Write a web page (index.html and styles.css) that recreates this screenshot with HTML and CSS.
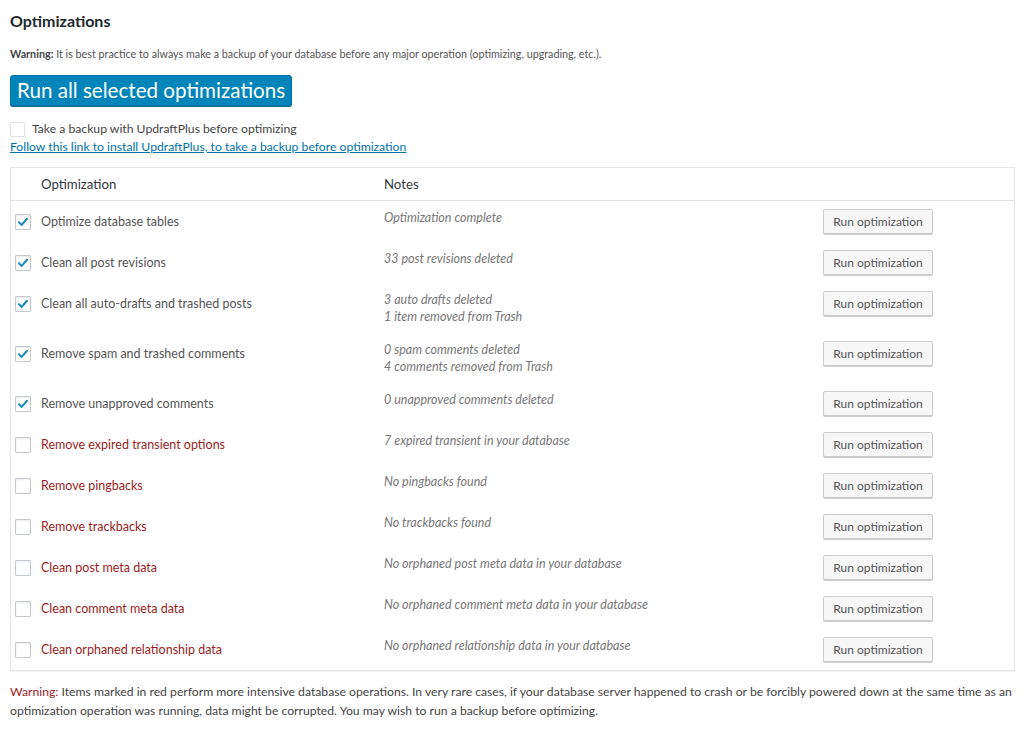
FILE: index.html
```html
<!DOCTYPE html>
<html lang="en">
<head>
<meta charset="utf-8">
<title>Optimizations</title>
<link rel="stylesheet" href="styles.css">
</head>
<body>
<div class="page">
  <h2 class="title">Optimizations</h2>
  <p class="top-warning"><strong>Warning:</strong> It is best practice to always make a backup of your database before any major operation (optimizing, upgrading, etc.).</p>
  <button class="primary-btn" type="button">Run all selected optimizations</button>
  <label class="backup-row"><span class="cb cb-light"></span><span class="backup-text">Take a backup with UpdraftPlus before optimizing</span></label>
  <a class="install-link" href="#">Follow this link to install UpdraftPlus, to take a backup before optimization</a>

  <div class="opt-table">
    <div class="row head">
      <div class="c-check"></div>
      <div class="c-label">Optimization</div>
      <div class="c-notes">Notes</div>
      <div class="c-action"></div>
    </div>

    <div class="row">
      <div class="c-check"><span class="cb checked"><svg viewBox="0 0 16 16"><path d="M3.4 8.3 L6.5 11.3 L12.6 4.3"/></svg></span></div>
      <div class="c-label">Optimize database tables</div>
      <div class="c-notes">Optimization complete</div>
      <div class="c-action"><button class="btn" type="button">Run optimization</button></div>
    </div>
    <div class="row">
      <div class="c-check"><span class="cb checked"><svg viewBox="0 0 16 16"><path d="M3.4 8.3 L6.5 11.3 L12.6 4.3"/></svg></span></div>
      <div class="c-label">Clean all post revisions</div>
      <div class="c-notes">33 post revisions deleted</div>
      <div class="c-action"><button class="btn" type="button">Run optimization</button></div>
    </div>
    <div class="row">
      <div class="c-check"><span class="cb checked"><svg viewBox="0 0 16 16"><path d="M3.4 8.3 L6.5 11.3 L12.6 4.3"/></svg></span></div>
      <div class="c-label">Clean all auto-drafts and trashed posts</div>
      <div class="c-notes">3 auto drafts deleted<br>1 item removed from Trash</div>
      <div class="c-action"><button class="btn" type="button">Run optimization</button></div>
    </div>
    <div class="row">
      <div class="c-check"><span class="cb checked"><svg viewBox="0 0 16 16"><path d="M3.4 8.3 L6.5 11.3 L12.6 4.3"/></svg></span></div>
      <div class="c-label">Remove spam and trashed comments</div>
      <div class="c-notes">0 spam comments deleted<br>4 comments removed from Trash</div>
      <div class="c-action"><button class="btn" type="button">Run optimization</button></div>
    </div>
    <div class="row">
      <div class="c-check"><span class="cb checked"><svg viewBox="0 0 16 16"><path d="M3.4 8.3 L6.5 11.3 L12.6 4.3"/></svg></span></div>
      <div class="c-label">Remove unapproved comments</div>
      <div class="c-notes">0 unapproved comments deleted</div>
      <div class="c-action"><button class="btn" type="button">Run optimization</button></div>
    </div>
    <div class="row">
      <div class="c-check"><span class="cb"></span></div>
      <div class="c-label red">Remove expired transient options</div>
      <div class="c-notes">7 expired transient in your database</div>
      <div class="c-action"><button class="btn" type="button">Run optimization</button></div>
    </div>
    <div class="row">
      <div class="c-check"><span class="cb"></span></div>
      <div class="c-label red">Remove pingbacks</div>
      <div class="c-notes">No pingbacks found</div>
      <div class="c-action"><button class="btn" type="button">Run optimization</button></div>
    </div>
    <div class="row">
      <div class="c-check"><span class="cb"></span></div>
      <div class="c-label red">Remove trackbacks</div>
      <div class="c-notes">No trackbacks found</div>
      <div class="c-action"><button class="btn" type="button">Run optimization</button></div>
    </div>
    <div class="row">
      <div class="c-check"><span class="cb"></span></div>
      <div class="c-label red">Clean post meta data</div>
      <div class="c-notes">No orphaned post meta data in your database</div>
      <div class="c-action"><button class="btn" type="button">Run optimization</button></div>
    </div>
    <div class="row">
      <div class="c-check"><span class="cb"></span></div>
      <div class="c-label red">Clean comment meta data</div>
      <div class="c-notes">No orphaned comment meta data in your database</div>
      <div class="c-action"><button class="btn" type="button">Run optimization</button></div>
    </div>
    <div class="row">
      <div class="c-check"><span class="cb"></span></div>
      <div class="c-label red">Clean orphaned relationship data</div>
      <div class="c-notes">No orphaned relationship data in your database</div>
      <div class="c-action"><button class="btn" type="button">Run optimization</button></div>
    </div>
  </div>

  <div class="bottom-warning">
    <div class="bw-line"><span class="warn-red">Warning:</span> Items marked in red perform more intensive database operations. In very rare cases, if your database server happened to crash or be forcibly powered down at the same time as an</div>
    <div class="bw-line">optimization operation was running, data might be corrupted. You may wish to run a backup before optimizing.</div>
  </div>
</div>
</body>
</html>
```

FILE: styles.css
```css
* { box-sizing: border-box; }

html, body {
  margin: 0;
  padding: 0;
  background: #ffffff;
}

body {
  font-family: Lato, "Open Sans", "Liberation Sans", sans-serif;
  color: #444;
}

.page {
  padding: 11px 9px 0 10px;
}

.title {
  margin: 0;
  font-size: 16px;
  line-height: 20px;
  font-weight: 700;
  color: #23282d;
}

.top-warning {
  margin: 16px 0 0;
  font-size: 10.75px;
  line-height: 14px;
  color: #555;
}

.top-warning strong {
  font-weight: 700;
  color: #444;
}

.primary-btn {
  display: block;
  margin: 14px 0 0;
  height: 31px;
  padding: 0 6px 2px 6px;
  white-space: nowrap;
  font-family: inherit;
  font-size: 20.6px;
  line-height: 28px;
  color: #fff;
  background: #0085ba;
  border: 1px solid #0073aa;
  border-radius: 3px;
  box-shadow: 0 1px 0 #006799;
  text-align: center;
}

.backup-row {
  display: flex;
  align-items: center;
  gap: 7px;
  margin-top: 14px;
  height: 18px;
  font-size: 12.2px;
  line-height: 18px;
  color: #444;
}

.cb {
  display: inline-flex;
  align-items: center;
  justify-content: center;
  width: 16px;
  height: 16px;
  border: 1px solid #c4c9ce;
  background: #fff;
  border-radius: 1px;
  box-shadow: inset 0 1px 2px rgba(0,0,0,0.08);
  flex: none;
}

.cb-light {
  width: 15px;
  height: 15px;
  border-color: #e2e2e2;
  box-shadow: none;
}

.cb svg {
  width: 14px;
  height: 14px;
}

.cb svg path {
  fill: none;
  stroke: #1e8cbe;
  stroke-width: 2.4;
  stroke-linecap: round;
  stroke-linejoin: round;
}

.install-link {
  display: block;
  font-size: 12.2px;
  line-height: 18px;
  color: #0073aa;
  text-decoration: underline;
}

.opt-table {
  margin-top: 11px;
  border: 1px solid #e5e5e5;
  box-shadow: 0 1px 1px rgba(0,0,0,0.04);
}

.row {
  display: grid;
  grid-template-columns: 30px 343px 439px 1fr;
  align-items: start;
  padding: 8px 0;
}

.row.head {
  padding: 7px 0 7px;
  border-bottom: 1px solid #e1e1e1;
}

.c-check {
  height: 25px;
  display: flex;
  align-items: center;
  padding-left: 4px;
}

.row.head .c-check { height: 18px; }

.c-label {
  font-size: 12.5px;
  line-height: 25px;
  color: #555;
}

.row.head .c-label,
.row.head .c-notes {
  font-size: 13.2px;
  line-height: 18px;
  font-style: normal;
  color: #32373c;
  padding: 0;
}

.c-label.red {
  color: #9b1c1c;
}

.c-notes {
  padding-top: 1px;
  font-size: 12.5px;
  line-height: 16.5px;
  font-style: italic;
  color: #777;
}

.btn {
  height: 25px;
  width: 110px;
  padding: 0 0 1px;
  font-family: inherit;
  font-size: 12px;
  color: #555;
  background: #f7f7f7;
  border: 1px solid #cccccc;
  border-radius: 2px;
  box-shadow: 0 1px 0 #cccccc;
}

.bottom-warning {
  margin: 11px 0 0;
  font-size: 12.2px;
  line-height: 19px;
  color: #444;
}

.bw-line {
  white-space: nowrap;
}

.warn-red {
  color: #9b1c1c;
}
```
